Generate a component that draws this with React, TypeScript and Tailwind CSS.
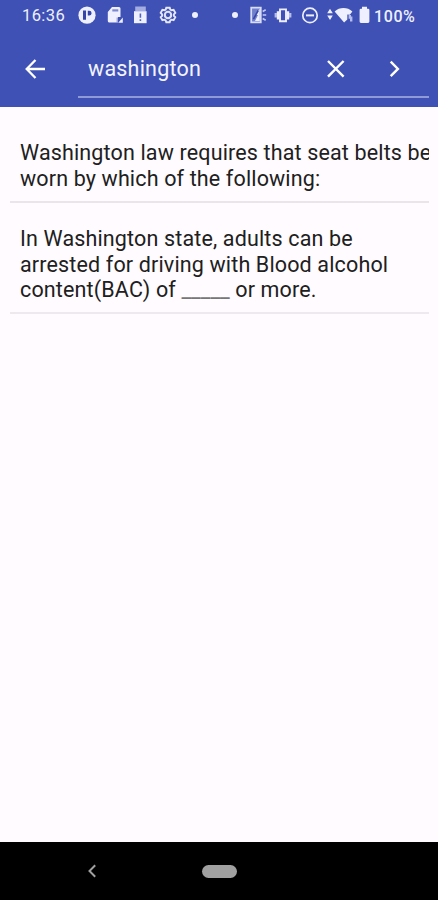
import type { ReactNode } from 'react'

interface IconProps {
  className: string
  viewBox: string
  children: ReactNode
}

function Icon({ className, viewBox, children }: IconProps) {
  return (
    <svg className={`shrink-0 ${className}`} viewBox={viewBox} fill="none" aria-hidden="true">
      {children}
    </svg>
  )
}

function StatusBar() {
  return (
    <div className="flex h-[31px] items-center pb-px pl-[22px] text-[16px] text-[#eef0ff]">
      <span className="w-[56px] whitespace-nowrap pt-[3px] text-[16.5px] tracking-[0.4px]">16:36</span>
      {/* Parking notification */}
      <Icon className="h-[18px] w-[18px]" viewBox="0 0 18 18">
        <circle cx="9" cy="9.2" r="8.6" fill="currentColor" />
        <path d="M5 4.6h3v9.2H5zM9.8 4.8h1.4a2.4 2.4 0 0 1 0 4.8H9.8z" fill="#3546a8" />
      </Icon>
      {/* SD card */}
      <Icon className="ml-[11px] h-[18px] w-[17px]" viewBox="0 0 17 18">
        <path d="M5 1h7a1.5 1.5 0 0 1 1.5 1.5V11H11v5.5H2A1.5 1.5 0 0 1 .8 15V6z" fill="currentColor" />
        <path d="M5.3 3.3h6v2.2h-6z" fill="#7c89d0" />
        <path d="M10.2 11.5v5.2" stroke="#7c89d0" strokeWidth="1" />
        <path d="M15.8 11.5v5.2h-4.6z" fill="currentColor" />
      </Icon>
      {/* Storage alert */}
      <Icon className="ml-[9px] h-[18px] w-[15px]" viewBox="0 0 15 18">
        <path d="M2.2.5h10.6v4.7H2.2z" fill="#a3ade2" />
        <path d="M1 5.2h12.6v12H1z" fill="currentColor" />
        <path d="M6.6 7.4h1.6v4.4H6.6zM6.6 13.2h1.6v1.8H6.6z" fill="#5363bd" />
      </Icon>
      {/* Settings */}
      <Icon className="ml-[11px] h-[18px] w-[18px]" viewBox="0 0 18 18">
        <path
          d="M7.3 1.7h3.4l.6 1.9 1.3.7 2-.4 1.7 3-1.4 1.4v1.5l1.4 1.4-1.7 3-2-.5-1.3.8-.6 1.8H7.3l-.6-1.8-1.3-.8-2 .5-1.7-3 1.4-1.4V8.3L1.7 6.9l1.7-3 2 .4 1.3-.7z"
          stroke="#e6e9fc"
          strokeWidth="1.9"
        />
        <circle cx="9" cy="9" r="3.2" stroke="#dfe3fa" strokeWidth="2.1" />
      </Icon>
      <span className="ml-[15px] h-[6px] w-[6px] shrink-0 rounded-full bg-[#eef0ff]" />
      <span className="ml-[34px] h-[6px] w-[6px] shrink-0 rounded-full bg-[#eef0ff]" />
      {/* Flash on phone */}
      <Icon className="ml-[12px] h-[18px] w-[17px]" viewBox="0 0 17 18">
        <path d="M1.2 1.7h9.6v14.6H1.2z" fill="#7280cc" stroke="#d7dcf7" strokeWidth="1.7" />
        <path d="M9.8 2.8v12.2H5L8 9H5.2z" fill="currentColor" />
        <path d="M3.4 13.2 8.2 4.5" stroke="#3546a8" strokeWidth="1.6" />
        <path d="M12.7 5.4l3-1.6M12.7 9h3.5M12.7 12.6l3 1.6" stroke="#c2caf0" strokeWidth="1.7" />
      </Icon>
      {/* Vibrate */}
      <Icon className="ml-[7px] h-[18px] w-[18px]" viewBox="0 0 18 18">
        <path d="M6 3.4h6v11.8H6z" stroke="currentColor" strokeWidth="1.9" />
        <path d="M4 5.2v8.2M14 5.2v8.2" stroke="currentColor" strokeWidth="2.4" />
        <path d="M1.8 7v4.5M16.2 7v4.5" stroke="#b4bdec" strokeWidth="2.4" />
      </Icon>
      {/* Do not disturb */}
      <Icon className="ml-[9px] h-[18px] w-[18px]" viewBox="0 0 18 18">
        <circle cx="9" cy="9.4" r="7.2" stroke="currentColor" strokeWidth="1.7" />
        <path d="M5 9.4h8" stroke="currentColor" strokeWidth="2" />
      </Icon>
      {/* Wi-Fi with data arrows */}
      <Icon className="ml-[7px] h-[18px] w-[28px]" viewBox="0 0 28 18">
        <path d="M4 2.8 6.8 7.2H1.2zM4 14l2.8-4.4H1.2z" fill="currentColor" />
        <path d="M8.6 5.4C13.6.8 21.4.8 26.4 5.4l-2.6 3.4-2.5-.2v5l-3.2 3z" fill="currentColor" />
        <path d="M23.8 9v2.6h1.4v4" stroke="#b4bdec" strokeWidth="2.4" />
      </Icon>
      {/* Battery */}
      <Icon className="ml-[5px] h-[18px] w-[11px]" viewBox="0 0 11 18">
        <path d="M3 .8h5v1.9h1a1.4 1.4 0 0 1 1.4 1.4v11.5A1.4 1.4 0 0 1 9 17H2a1.4 1.4 0 0 1-1.4-1.4V4.1A1.4 1.4 0 0 1 2 2.7h1z" fill="currentColor" />
      </Icon>
      <span className="ml-[4px] pt-[3px] font-medium tracking-[0.6px]">100%</span>
    </div>
  )
}

function SearchBar() {
  return (
    <div className="flex h-[76px] pl-[22px] pt-[6px] text-white">
      <button className="h-[63px] w-[56px]" aria-label="Back">
        <Icon className="ml-[1.5px] h-[22px] w-[22px]" viewBox="0 0 22 22">
          <path d="M21 11H3M11.5 2 2.7 11l8.8 9" stroke="currentColor" strokeWidth="2.3" />
        </Icon>
      </button>
      <div className="flex h-[61px] w-[351px] items-center border-b-2 border-[#8f9bd6] pl-[10px] pt-[4px]">
        <span className="w-[238px] text-[21.5px] leading-[26px] tracking-[0.22px] text-[#f3f4ff]">washington</span>
        <button aria-label="Clear">
          <Icon className="h-[20px] w-[20px]" viewBox="0 0 20 20">
            <path d="m2 2 15.6 15.6M17.6 2 2 17.6" stroke="currentColor" strokeWidth="2.4" />
          </Icon>
        </button>
        <button className="ml-[43px]" aria-label="Next">
          <Icon className="h-[20px] w-[12px]" viewBox="0 0 12 20">
            <path d="m1.7 2.7 7.2 7.2-7.2 7.2" stroke="currentColor" strokeWidth="2.4" />
          </Icon>
        </button>
      </div>
    </div>
  )
}

export default function App() {
  return (
    <div className="flex h-[900px] w-[438px] flex-col overflow-hidden bg-[#fffbff] font-['Roboto',sans-serif]">
      <header className="h-[107px] shrink-0 bg-[#3f51b5]">
        <StatusBar />
        <SearchBar />
      </header>

      <main className="ml-[10px] w-[419px] flex-1 overflow-hidden text-[21.5px] leading-[25.6px] tracking-[0.15px] text-[#202020]">
        <p className="h-[96px] whitespace-nowrap border-b-2 border-[#eae5ea] pl-[10px] pt-[33px]">
          Washington law requires that seat belts be
          <br />
          worn by which of the following:
        </p>
        <p className="h-[111px] whitespace-nowrap border-b-2 border-[#eee9ee] pl-[10px] pt-[23px]">
          In Washington state, adults can be
          <br />
          arrested for driving with Blood alcohol
          <br />
          content(BAC) of <span className="tracking-[-0.03px] text-[#777]">_____</span> or more.
        </p>
      </main>

      <nav className="flex h-[58px] shrink-0 items-center bg-black pl-[87px] text-[#a0a0a0]">
        <Icon className="h-[14px] w-[10px]" viewBox="0 0 10 14">
          <path d="M8.2 1.2 2.5 7l5.7 5.8" stroke="currentColor" strokeWidth="2" />
        </Icon>
        <span className="ml-[105px] h-[13px] w-[35px] rounded-full bg-[#a0a0a0]" />
      </nav>
    </div>
  )
}
